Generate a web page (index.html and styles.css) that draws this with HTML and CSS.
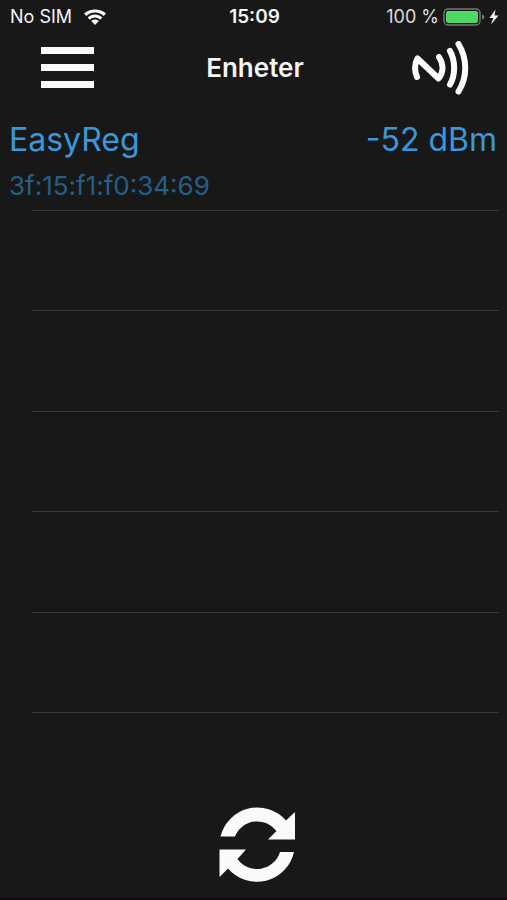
FILE: index.html
```html
<!DOCTYPE html>
<html lang="sv">
<head>
<meta charset="utf-8">
<meta name="viewport" content="width=device-width, initial-scale=1">
<title>Enheter</title>
<link rel="stylesheet" href="styles.css">
</head>
<body>
<div class="status">
  <div class="status-left">
    <span>No SIM</span>
    <svg class="wifi" width="24" height="18" viewBox="0 0 24 18" aria-hidden="true">
      <path d="M1 5.6C7 .1 17 .1 23 5.6L20.7 8C15.8 3.4 8.200 3.400 3.300 8Z"/>
      <path d="M4.600 9.400C8.700 5.400 15.300 5.400 19.400 9.400L17.100 11.700C14.200 8.900 9.800 8.900 6.900 11.700Z"/>
      <path d="M8.200 13C10.300 11 13.700 11 15.800 13L12 17Z"/>
    </svg>
  </div>
  <time class="clock">15:09</time>
  <div class="status-right">
    <span>100 %</span>
    <svg class="battery" width="56" height="20" viewBox="0 0 56 20" aria-hidden="true">
      <rect x="1" y="2" width="36" height="16" rx="4" fill="none" stroke="#77777a" stroke-width="1.400"/>
      <rect x="3" y="4" width="32" height="12" rx="2" fill="#4cd964"/>
      <path d="M39 7.500Q41.500 8 41.500 10T39 12.500Z" fill="#77777a"/>
      <path d="M52.500 2.500L46.500 11H50.200L48 17.500L55.500 8.500H51.500Z" fill="#f4f4f4"/>
    </svg>
  </div>
</div>
<header class="navbar">
  <button class="icon-button menu" type="button" aria-label="Meny">
    <svg width="54" height="42" viewBox="0 0 54 42" fill="#fafafa" aria-hidden="true">
      <rect x="1" y="0" width="53" height="7"/>
      <rect x="1" y="17" width="53" height="7"/>
      <rect x="1" y="34" width="53" height="7"/>
    </svg>
  </button>
  <h1 class="title">Enheter</h1>
  <button class="icon-button nfc" type="button" aria-label="NFC">
    <svg width="58" height="54" viewBox="0 0 58 54" fill="none" stroke="#fafafa" stroke-width="6" stroke-linecap="round" stroke-linejoin="round" aria-hidden="true">
      <path d="M5 36C2.500 30 2.500 23 5.500 17.500L26.500 37.500C32 31 31.500 23 27 16"/>
      <path d="M38 10C43.500 20 43.500 34 38 43.500"/>
      <path d="M46.500 3C55.500 18 55.500 36 46.500 50.500"/>
    </svg>
  </button>
</header>
<main class="devices">
  <a class="row device" href="#device">
    <span class="summary"><span>EasyReg</span><span>-52 dBm</span></span>
    <span class="address">3f:15:f1:f0:34:69</span>
  </a>
  <div class="row"></div>
  <div class="row"></div>
  <div class="row"></div>
  <div class="row"></div>
  <div class="row"></div>
</main>
<footer class="toolbar">
  <button class="icon-button" type="button" aria-label="Uppdatera">
    <svg width="78" height="78" viewBox="218 806 78 78" fill="#fafafa" aria-hidden="true">
      <path d="M220.500 836.500A38 38 0 0 1 286 820.500L295 812V839.500H268L276.500 831A24 24 0 0 0 235 836.500Z"/>
      <path d="M219.500 849.500H246L237.500 859A24 24 0 0 0 280 852H294A38 38 0 0 1 228 868.500L219.500 877Z"/>
    </svg>
  </button>
</footer>
</body>
</html>
```
FILE: styles.css
```css
* {
  box-sizing: border-box;
}

body {
  display: flex;
  flex-direction: column;
  min-height: 100vh;
  margin: 0;
  border-bottom: 2px solid #100a12;
  background: #181818;
  color: #f4f4f4;
  font-family: Inter, "Liberation Sans", sans-serif;
}

.status,
.navbar {
  display: grid;
  grid-template-columns: 1fr auto 1fr;
  align-items: center;
}

.status {
  height: 34px;
  padding: 0 8px 0 10px;
  font-size: 18px;
  line-height: 24px;
}

.status-left,
.status-right {
  display: flex;
  align-items: center;
}

.status-left {
  gap: 11px;
}

.status-right {
  justify-content: flex-end;
  gap: 4px;
  color: #dedede;
}

.wifi {
  fill: #fafafa;
}

.clock {
  font-size: 19px;
  font-weight: 600;
}

.navbar {
  height: 68px;
  padding: 0 37px 0 40px;
  border-bottom: 1px solid #151515;
}

.title {
  margin: 0;
  font-size: 26px;
  font-weight: 600;
  line-height: 32px;
}

.icon-button {
  display: flex;
  padding: 0;
  border: 0;
  background: none;
  cursor: pointer;
}

.menu {
  justify-self: start;
}

.nfc {
  justify-self: end;
}

.devices {
  display: grid;
  flex: 1;
  grid-auto-rows: 1fr;
  padding-top: 8px;
}

.row {
  padding: 8px 10px 8px 9px;
  background: linear-gradient(#383838, #383838) right 8px bottom / calc(100% - 40px) 1px no-repeat;
}

.device {
  display: flex;
  flex-direction: column;
  gap: 8px;
  color: #3a98d8;
  text-decoration: none;
}

.summary {
  display: flex;
  justify-content: space-between;
  font-size: 32px;
  line-height: 44px;
}

.address {
  color: #255f87;
  font-size: 26px;
  line-height: 32px;
}

.toolbar {
  display: flex;
  justify-content: center;
  height: 185px;
  padding: 93px 0 0 7px;
}
```
